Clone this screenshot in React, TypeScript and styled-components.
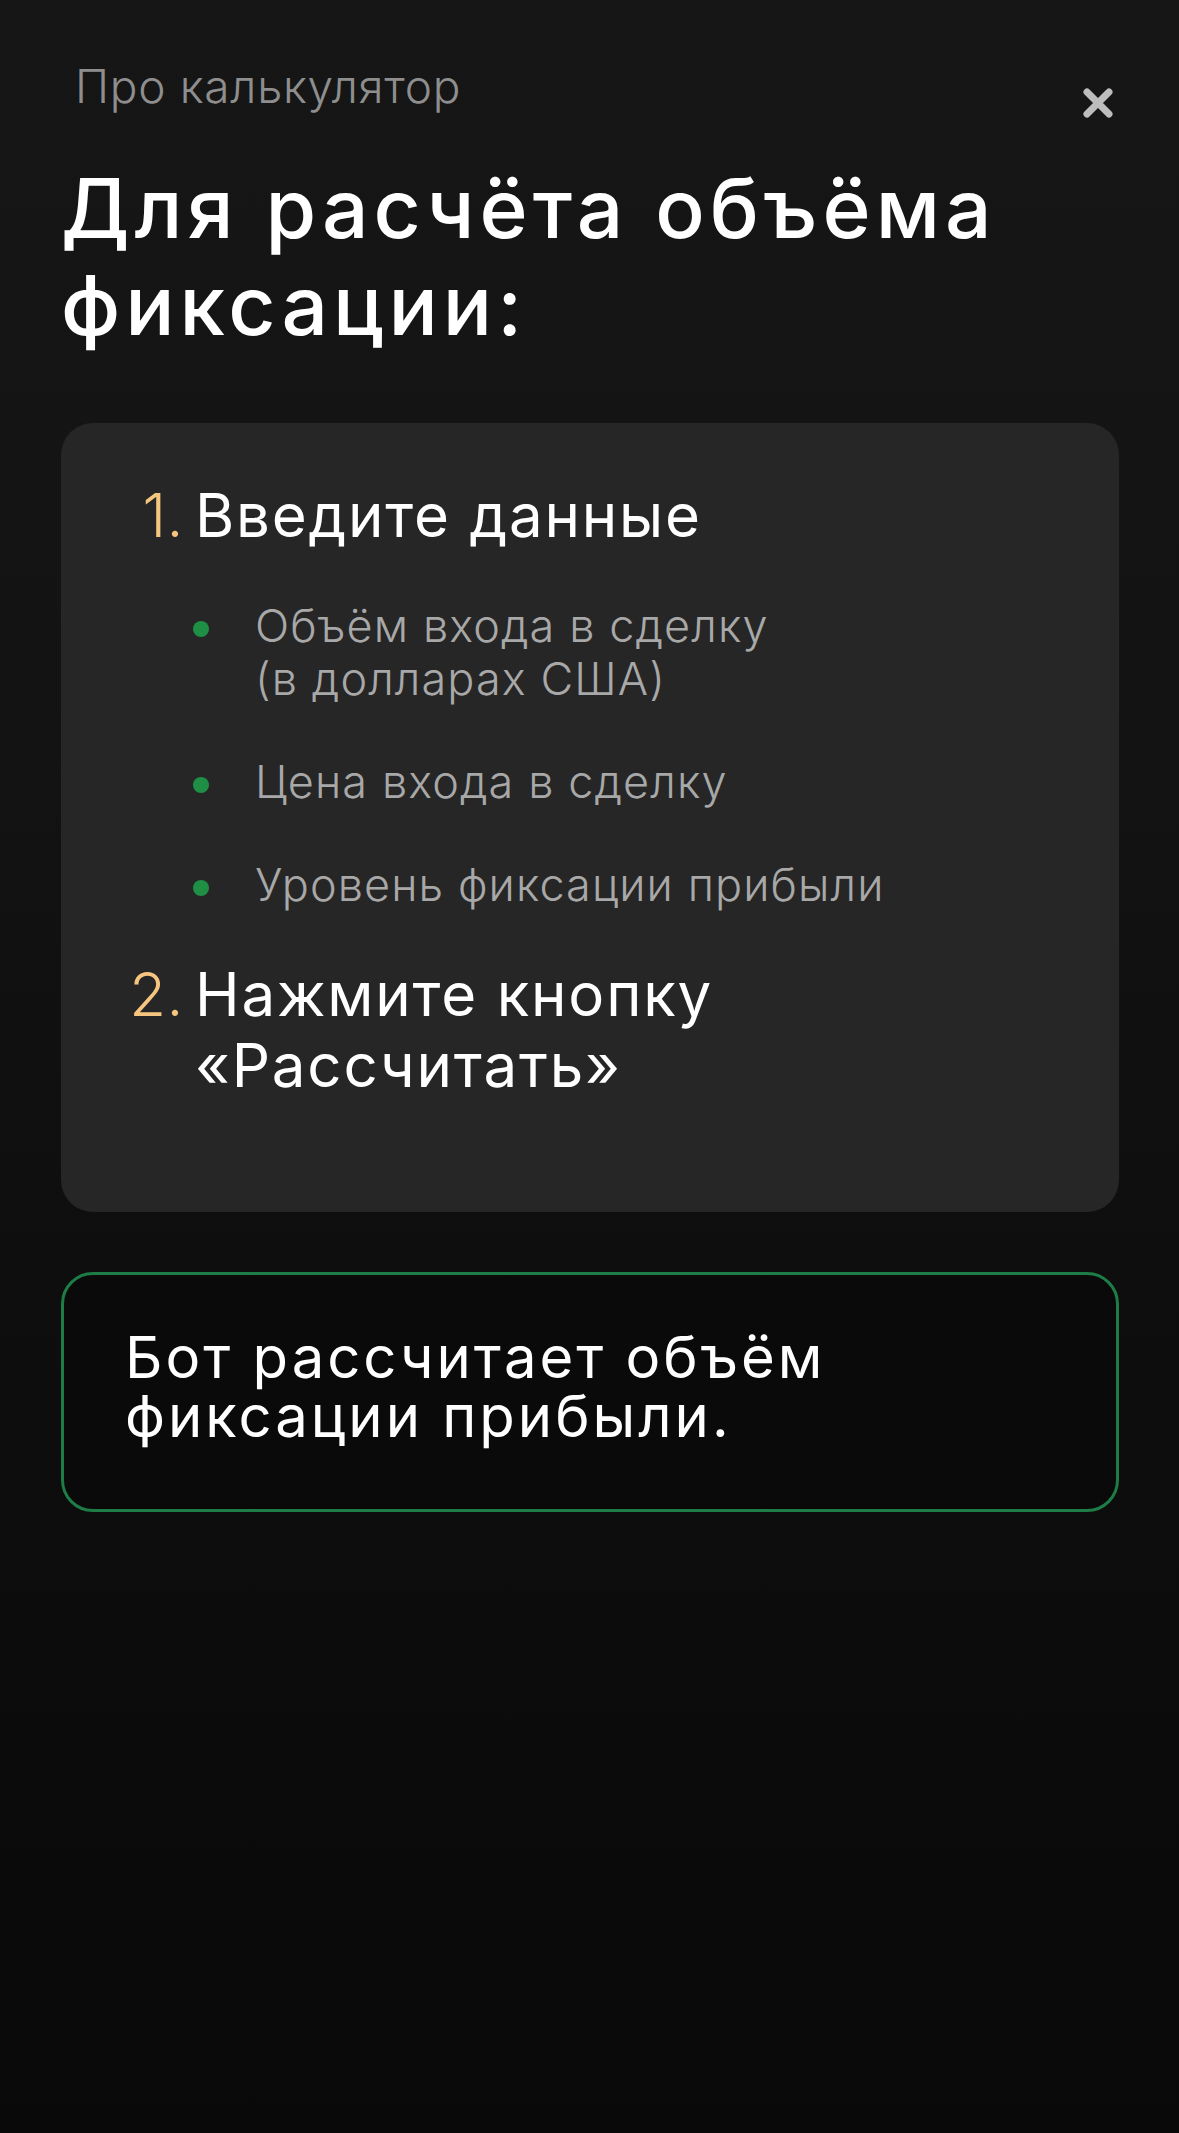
import React from "react";
import styled, { createGlobalStyle } from "styled-components";

const GlobalStyle = createGlobalStyle`
  html, body {
    margin: 0;
    padding: 0;
  }
  body {
    background: #0b0b0b;
    font-family: Inter, "Noto Sans", "DejaVu Sans", sans-serif;
    -webkit-font-smoothing: antialiased;
  }
  * { box-sizing: border-box; }
`;

const Page = styled.div`
  min-height: 2133px;
  width: 1179px;
  padding: 58px 61px 0 61px;
  background: linear-gradient(180deg, #161616 0%, #131313 35%, #0e0e0e 60%, #090909 100%);
  color: #fff;
`;

const TopBar = styled.div`
  display: flex;
  justify-content: space-between;
  align-items: flex-start;
`;

const Subtitle = styled.div`
  margin-left: 14px;
  font-size: 46px;
  line-height: 56px;
  font-weight: 300;
  color: #8e8e8e;
  letter-spacing: 0.7px;
`;

const CloseButton = styled.button`
  margin-top: 28px;
  margin-right: 3px;
  width: 34px;
  height: 34px;
  padding: 0;
  border: none;
  background: transparent;
  display: flex;
  align-items: center;
  justify-content: center;
  cursor: pointer;
`;

const Title = styled.h1`
  margin: 40px 0 0 0;
  font-size: 82px;
  line-height: 97px;
  font-weight: 500;
  letter-spacing: 5px;
  color: #ffffff;
`;

const Card = styled.div`
  margin-top: 69px;
  width: 1058px;
  background: #262626;
  border-radius: 32px;
  padding: 57px 40px 111px 61px;
  display: flex;
  flex-direction: column;
  gap: 48px;
`;

const Step = styled.div`
  display: grid;
  grid-template-columns: 62px 1fr;
  column-gap: 11px;
  row-gap: 48px;
`;

const StepNumber = styled.div`
  font-size: 60px;
  line-height: 71px;
  font-weight: 300;
  color: #f6c57f;
  text-align: right;
  letter-spacing: 0.5px;
  white-space: nowrap;
`;

const StepText = styled.div`
  font-size: 60px;
  line-height: 71px;
  font-weight: 400;
  color: #ffffff;
  letter-spacing: 1.8px;
`;

const Bullets = styled.ul`
  grid-column: 2;
  list-style: none;
  margin: 0;
  padding: 0;
  display: flex;
  flex-direction: column;
  gap: 50px;
`;

const Bullet = styled.li`
  display: flex;
  align-items: flex-start;
  gap: 46px;
`;

const Dot = styled.span`
  flex: none;
  width: 16px;
  height: 16px;
  margin-top: 22px;
  margin-left: -2px;
  border-radius: 50%;
  background: #1f8f45;
`;

const BulletText = styled.span`
  font-size: 45px;
  line-height: 53px;
  font-weight: 300;
  color: #a8a8a8;
  letter-spacing: 1.1px;
`;

const ResultBox = styled.div`
  margin-top: 60px;
  width: 1058px;
  border: 3px solid #1e7c46;
  border-radius: 32px;
  padding: 53px 40px 63px 61px;
  background: rgba(8, 8, 8, 0.6);
`;

const ResultText = styled.div`
  font-size: 58px;
  line-height: 59px;
  font-weight: 400;
  color: #ffffff;
  letter-spacing: 3px;
`;

const CloseIcon = () => (
  <svg width="34" height="34" viewBox="0 0 34 34" aria-hidden="true">
    <path
      d="M6 6 L28 28 M28 6 L6 28"
      stroke="#bdbdbd"
      strokeWidth="7"
      strokeLinecap="round"
      fill="none"
    />
  </svg>
);

export default function App() {
  return (
    <>
      <GlobalStyle />
      <Page>
        <TopBar>
          <Subtitle>Про калькулятор</Subtitle>
          <CloseButton aria-label="Закрыть">
            <CloseIcon />
          </CloseButton>
        </TopBar>
        <Title>
          Для расчёта объёма
          <br />
          фиксации:
        </Title>
        <Card>
          <Step>
            <StepNumber>1.</StepNumber>
            <StepText>Введите данные</StepText>
            <Bullets>
              <Bullet>
                <Dot />
                <BulletText>
                  Объём входа в сделку
                  <br />
                  (в долларах США)
                </BulletText>
              </Bullet>
              <Bullet>
                <Dot />
                <BulletText>Цена входа в сделку</BulletText>
              </Bullet>
              <Bullet>
                <Dot />
                <BulletText>Уровень фиксации прибыли</BulletText>
              </Bullet>
            </Bullets>
          </Step>
          <Step>
            <StepNumber>2.</StepNumber>
            <StepText>
              Нажмите кнопку
              <br />
              «Рассчитать»
            </StepText>
          </Step>
        </Card>
        <ResultBox>
          <ResultText>
            Бот рассчитает объём
            <br />
            фиксации прибыли.
          </ResultText>
        </ResultBox>
      </Page>
    </>
  );
}
